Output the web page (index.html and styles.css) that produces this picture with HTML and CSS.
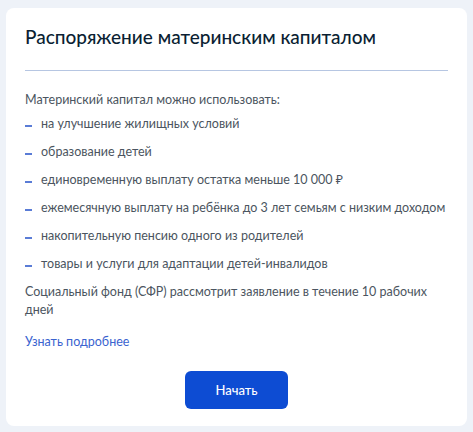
FILE: index.html
```html
<!DOCTYPE html>
<html lang="ru">
<head>
    <meta charset="utf-8">
    <title>Распоряжение материнским капиталом</title>
    <link rel="stylesheet" href="styles.css">
</head>
<body>
    <div class="card">
        <h1 class="card-title">Распоряжение материнским капиталом</h1>
        <hr class="divider">
        <p class="intro">Материнский капитал можно использовать:</p>
        <ul class="uses">
            <li>на улучшение жилищных условий</li>
            <li>образование детей</li>
            <li>единовременную выплату остатка меньше 10 000 ₽</li>
            <li>ежемесячную выплату на ребёнка до 3 лет семьям с низким доходом</li>
            <li>накопительную пенсию одного из родителей</li>
            <li>товары и услуги для адаптации детей-инвалидов</li>
        </ul>
        <p class="note">Социальный фонд (СФР) рассмотрит заявление в течение 10 рабочих дней</p>
        <a class="more" href="#">Узнать подробнее</a>
        <div class="actions">
            <button class="start" type="button">Начать</button>
        </div>
    </div>
</body>
</html>
```

FILE: styles.css
```css
/* Фон страницы */
body {
    margin: 0;
    padding: 8px 6px 6px;
    background: #eef2f8;
    font-family: Lato, "Noto Sans", sans-serif;
    color: #4b5560;
}

/* Карточка услуги */
.card {
    width: 461px;
    height: 418px;
    box-sizing: border-box;
    padding: 16px 19px 0;
    background: #fff;
    border-radius: 8px;
}

.card-title {
    margin: 0;
    font-size: 19px;
    line-height: 26px;
    font-weight: 500;
    color: #0b1f33;
}

.divider {
    margin: 20px 0 0;
    border: 0;
    border-top: 1px solid #b6c6e2;
}

.intro {
    margin: 20px 0 0;
    font-size: 12.5px;
    line-height: 18px;
}

/* Список вариантов использования */
.uses {
    margin: -4px 0 0;
    padding: 0;
    list-style: none;
}

.uses li {
    position: relative;
    padding-left: 16px;
    font-size: 12.5px;
    line-height: 18px;
    margin-top: 10px;
}

.uses li::before {
    content: "";
    position: absolute;
    left: 0;
    top: 10px;
    width: 7px;
    height: 2px;
    background: #5a7cd6;
}

.note {
    margin: 10px 0 0;
    font-size: 12.5px;
    line-height: 18px;
}

.more {
    display: inline-block;
    margin-top: 14px;
    font-size: 12.5px;
    line-height: 18px;
    color: #3a63cf;
    text-decoration: none;
}

.actions {
    display: flex;
    justify-content: center;
    margin-top: 20px;
}

.start {
    width: 103px;
    height: 38px;
    border: 0;
    border-radius: 6px;
    background: #0d4cd3;
    color: #fff;
    font-family: inherit;
    font-size: 13px;
    font-weight: 500;
    cursor: pointer;
}
```
